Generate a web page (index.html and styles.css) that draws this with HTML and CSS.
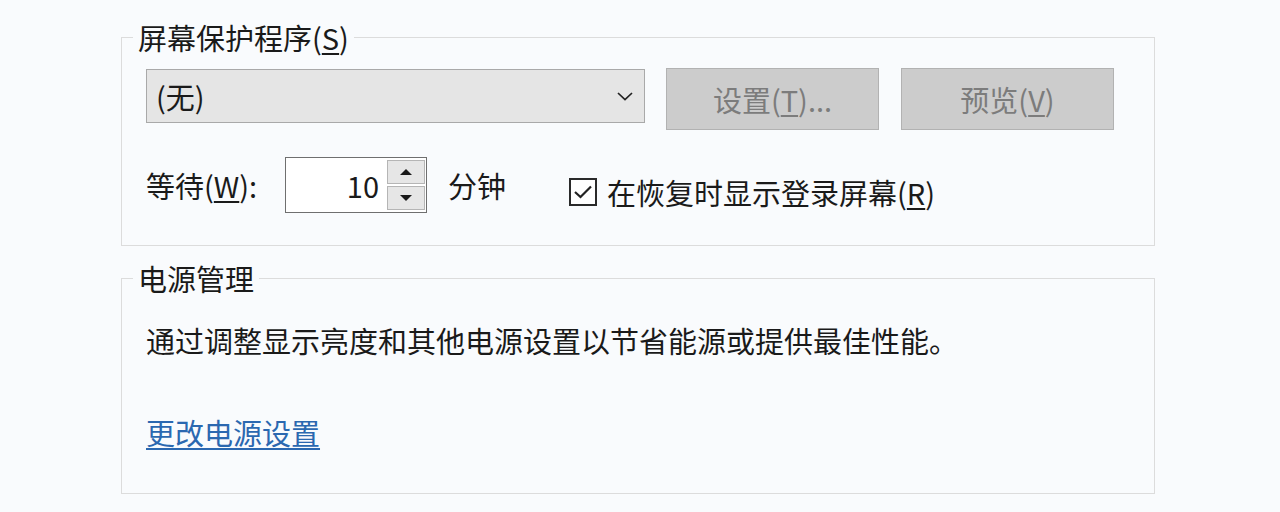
FILE: index.html
```html
<!DOCTYPE html>
<html lang="zh-CN">
<head>
<meta charset="utf-8">
<title>屏幕保护程序设置</title>
<link rel="stylesheet" href="styles.css">
</head>
<body>
<div class="page">
  <fieldset class="group group-saver">
    <legend class="legend">屏幕保护程序(<u>S</u>)</legend>
    <div class="row row-top">
      <div class="select">
        <span class="select-text">(无)</span>
        <svg class="chevron" width="18" height="10" viewBox="0 0 18 10"><polyline points="2,2 9,8.5 16,2" fill="none" stroke="#222" stroke-width="1.7"/></svg>
      </div>
      <div class="btn">设置(<u>T</u>)...</div>
      <div class="btn btn-last">预览(<u>V</u>)</div>
    </div>
    <div class="row row-wait">
      <span class="wait-label">等待(<u>W</u>):</span>
      <div class="spin">
        <span class="spin-value">10</span>
        <div class="spin-btns">
          <div class="spin-btn"><svg width="14" height="8" viewBox="0 0 14 8"><polygon points="1,7 7,1 13,7" fill="#1a1a1a"/></svg></div>
          <div class="spin-btn"><svg width="14" height="8" viewBox="0 0 14 8"><polygon points="1,1 7,7 13,1" fill="#1a1a1a"/></svg></div>
        </div>
      </div>
      <span class="unit">分钟</span>
      <div class="check">
        <span class="check-box"><svg width="24" height="24" viewBox="0 0 24 24"><polyline points="4,12 9.5,17 20,6.5" fill="none" stroke="#222" stroke-width="2.2"/></svg></span>
        <span class="check-text">在恢复时显示登录屏幕(<u>R</u>)</span>
      </div>
    </div>
  </fieldset>
  <fieldset class="group group-power">
    <legend class="legend">电源管理</legend>
    <p class="desc">通过调整显示亮度和其他电源设置以节省能源或提供最佳性能。</p>
    <a class="link" href="#">更改电源设置</a>
  </fieldset>
</div>
</body>
</html>
```

FILE: styles.css
```css
html, body {
  margin: 0;
  padding: 0;
  background: #f9fbfd;
}
body {
  font-family: "Noto Sans CJK SC", "Noto Sans", sans-serif;
  font-size: 29px;
  color: #1a1a1a;
  width: 1280px;
  height: 512px;
  overflow: hidden;
}
.page {
  padding: 22px 0 0 121px;
}
.group {
  width: 1034px;
  box-sizing: border-box;
  margin: 0;
  border: 1px solid #dcdcdc;
  padding: 0 24px 0 24px;
}
.group-saver {
  padding-top: 16px;
  padding-bottom: 32px;
}
.group-power {
  margin-top: 17px;
  padding-top: 32px;
  padding-bottom: 46px;
}
.legend {
  margin-left: -13px;
  padding: 0 5px;
  line-height: 30px;
  height: 30px;
}
u {
  text-decoration-thickness: 1.5px;
  text-underline-offset: 3px;
}
.row {
  display: flex;
}
.row-top {
  align-items: flex-start;
}
.select {
  width: 499px;
  height: 54px;
  margin-top: 1px;
  box-sizing: border-box;
  border: 1px solid #a9a9a9;
  background: #e5e5e5;
  display: flex;
  align-items: center;
  justify-content: space-between;
  padding: 0 10px 0 9px;
  line-height: 30px;
}
.btn {
  width: 213px;
  height: 62px;
  box-sizing: border-box;
  margin-left: 21px;
  border: 1px solid #b2b2b2;
  background: #cccccc;
  color: #7c7c7c;
  display: flex;
  align-items: center;
  justify-content: center;
  line-height: 30px;
}
.btn-last {
  margin-left: 22px;
}
.row-wait {
  margin-top: 27px;
  align-items: center;
}
.wait-label {
  width: 139px;
  line-height: 30px;
}
.spin {
  width: 142px;
  height: 56px;
  box-sizing: border-box;
  border: 1px solid #6f6f6f;
  background: #ffffff;
  display: flex;
  align-items: center;
  justify-content: flex-end;
  padding: 2px 1px;
}
.spin-value {
  line-height: 30px;
  margin-right: 8px;
}
.spin-btns {
  width: 38px;
  height: 50px;
  display: flex;
  flex-direction: column;
  gap: 2px;
}
.spin-btn {
  flex: 1;
  box-sizing: border-box;
  border: 1px solid #b5b5b5;
  background: #e6e6e6;
  display: flex;
  align-items: center;
  justify-content: center;
}
.unit {
  margin-left: 21px;
  line-height: 30px;
}
.check {
  display: flex;
  align-items: center;
  margin-left: 63px;
  padding-top: 14px;
}
.check-box {
  width: 28px;
  height: 28px;
  box-sizing: border-box;
  border: 2px solid #2a2a2a;
  background: #ffffff;
  display: flex;
  align-items: center;
  justify-content: center;
}
.check-text {
  margin-left: 10px;
  line-height: 30px;
}
.desc {
  margin: 0;
  line-height: 30px;
}
.link {
  display: block;
  width: fit-content;
  margin-top: 62px;
  line-height: 30px;
  color: #2b68b0;
  text-decoration: underline;
  text-decoration-thickness: 1.5px;
  text-underline-offset: 3px;
}
```
